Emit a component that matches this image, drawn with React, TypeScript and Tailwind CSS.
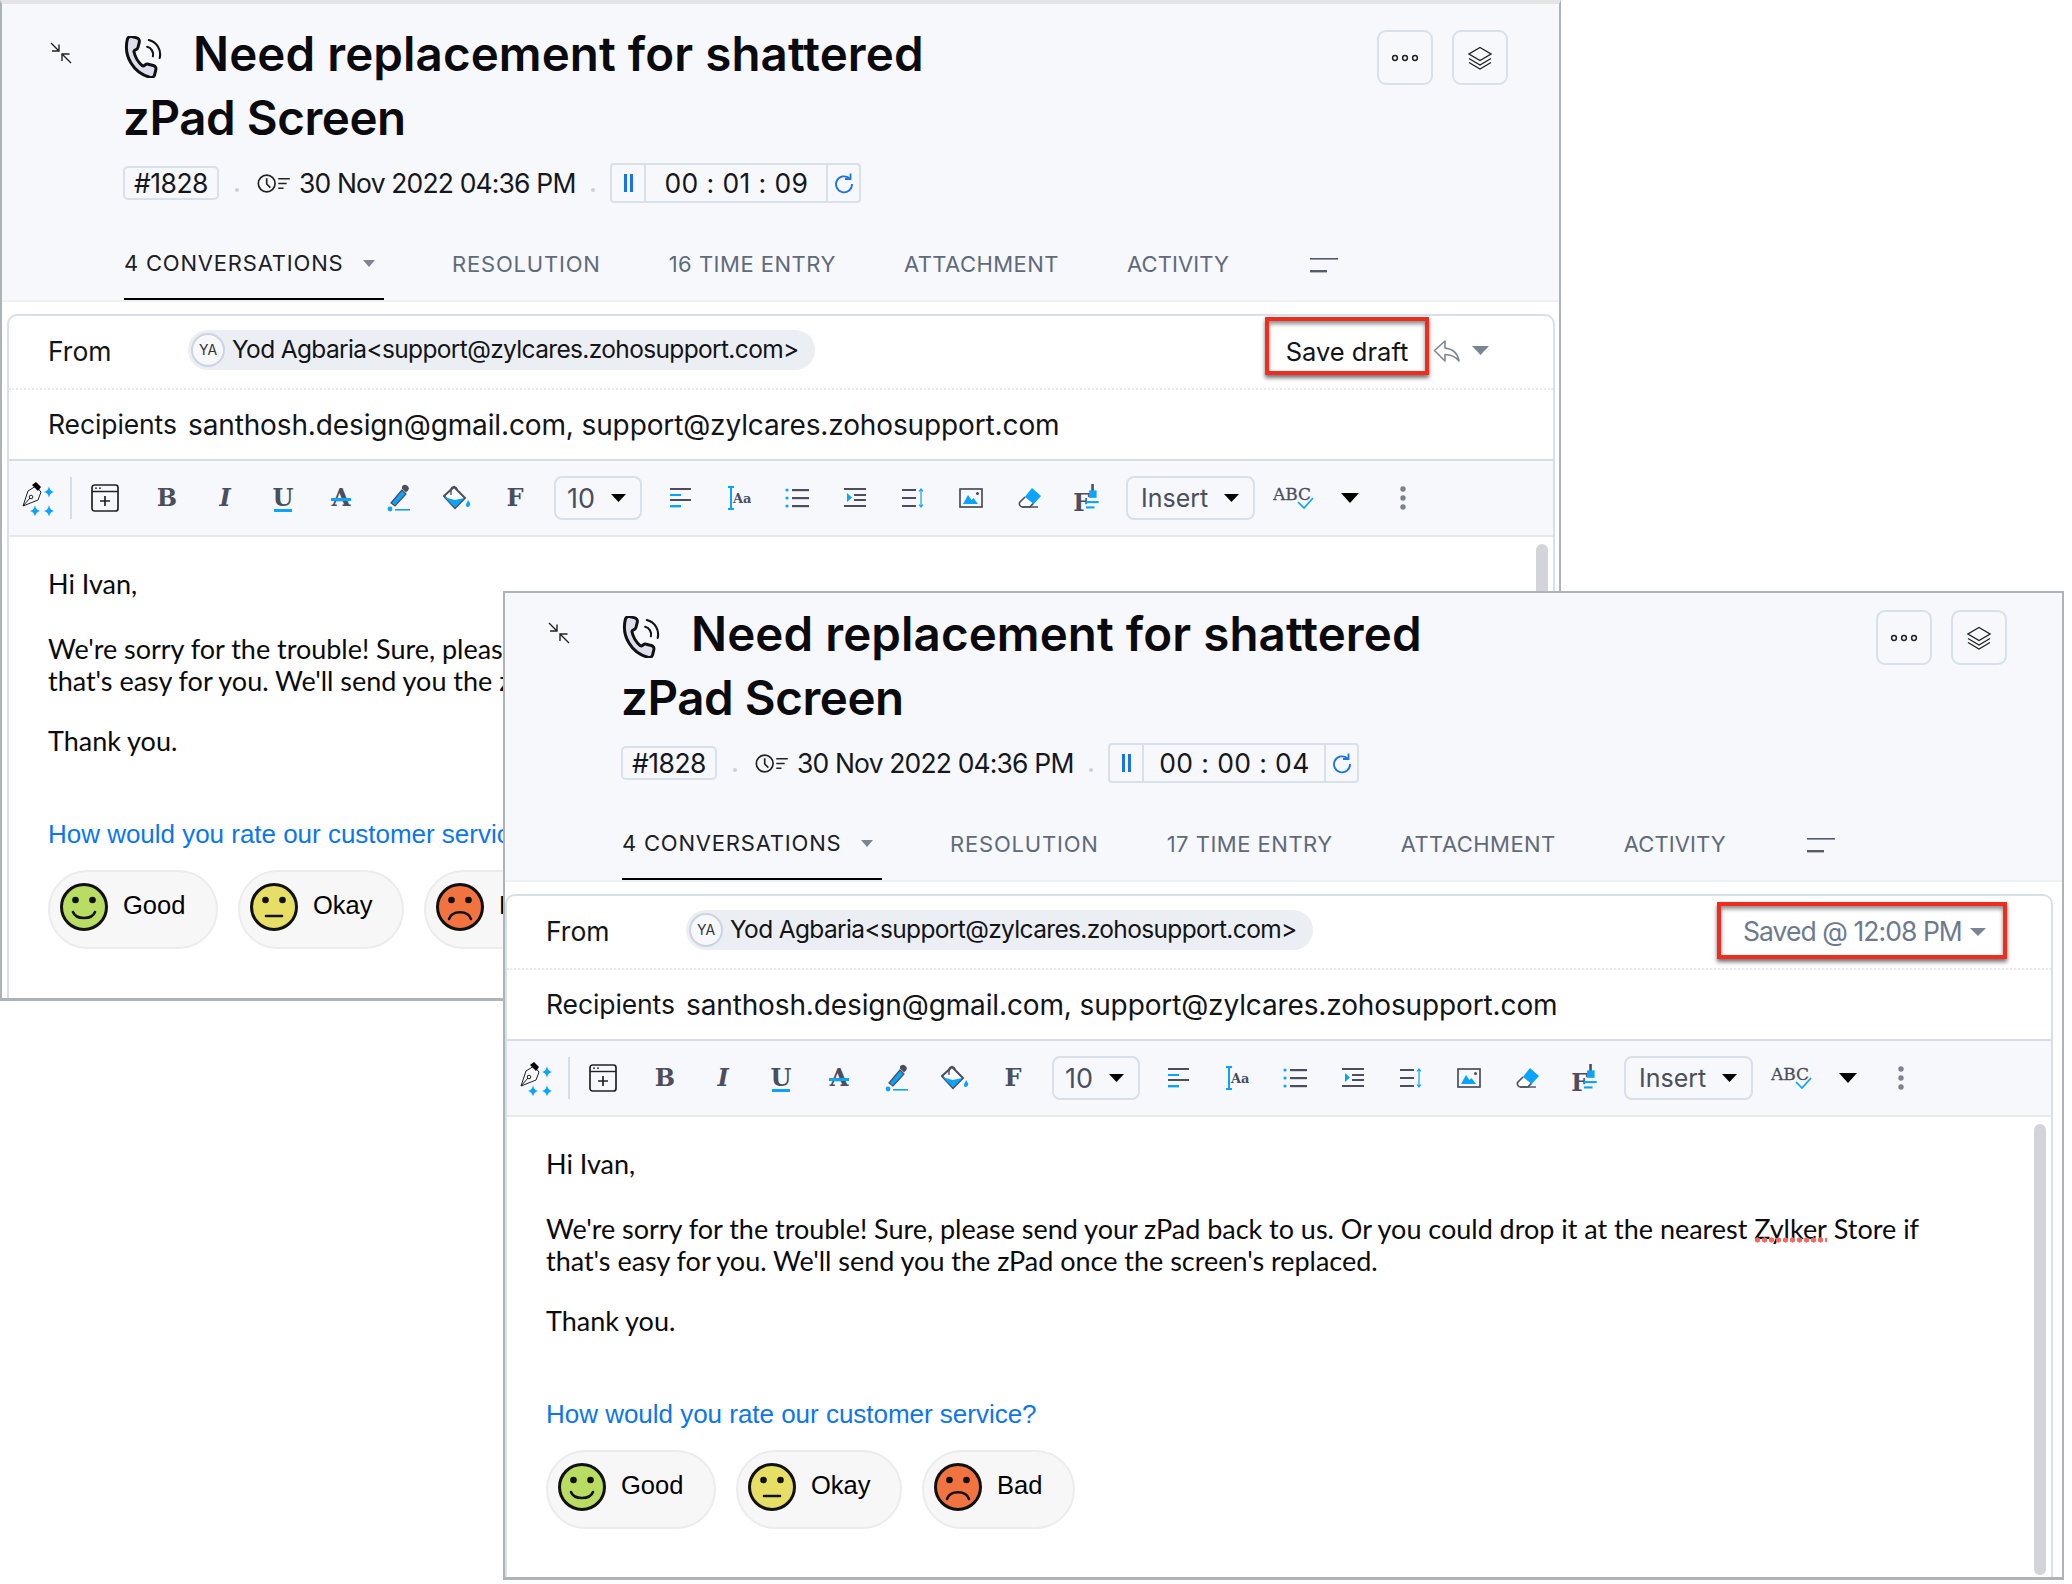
import type { ReactNode } from 'react';

const INK = '#4b4e5c';
const BLUE = '#0aa4ff';
const SERIF = 'DejaVu Serif, serif';

function Collapse() {
  return (
    <svg width="22" height="22" viewBox="0 0 22 22" fill="none" stroke="#222" strokeWidth="1.4" className="shrink-0">
      <path d="M1 1l8 8M9 2.5V9H2" />
      <path d="M21 21l-9-9M12 19v-7h7.5" />
    </svg>
  );
}

function PhoneIcon() {
  return (
    <svg width="42" height="42" viewBox="0 0 24 24" fill="none" className="-ml-[3px] mr-[31px] inline-block align-[-7px]">
      <g transform="rotate(14 12 12)" stroke="#111" strokeWidth="1.7" strokeLinejoin="round" strokeLinecap="round">
        <path
          fill="#dde0ec"
          d="M13.832 16.568a1 1 0 0 0 1.213-.303l.355-.465A2 2 0 0 1 17 15h3a2 2 0 0 1 2 2v3a2 2 0 0 1-2 2A18 18 0 0 1 2 4a2 2 0 0 1 2-2h3a2 2 0 0 1 2 2v3a2 2 0 0 1-.8 1.6l-.468.351a1 1 0 0 0-.292 1.233 14 14 0 0 0 6.392 6.384"
        />
        <path strokeWidth="1.2" d="M14 1.5a8.5 8.5 0 0 1 8.5 8.5" />
        <path strokeWidth="1.2" d="M14 5.5a4.5 4.5 0 0 1 4.5 4.5" />
      </g>
    </svg>
  );
}

function ClockLines() {
  return (
    <svg width="34" height="21" viewBox="0 0 32 20" fill="none" stroke="#222" strokeWidth="1.6" className="shrink-0">
      <circle cx="10" cy="10" r="8" />
      <path d="M10 5v5.5l3.5 3.5" />
      <path d="M21 5.5h11M21 10h8M21 14.5h5" />
    </svg>
  );
}

function Refresh() {
  return (
    <svg width="20" height="22" viewBox="0 0 20 22" fill="none" stroke="#1a73e8" strokeWidth="1.8">
      <path d="M15.5 6.5A8 8 0 1 0 18 12" />
      <path d="M16.5 1.5v5.5H11" />
    </svg>
  );
}

function Arrow({ w = 14, h = 8, color = '#000' }: { w?: number; h?: number; color?: string }) {
  return (
    <svg width={w} height={h} viewBox="0 0 14 8" preserveAspectRatio="none" className="shrink-0">
      <path d="M0 0h14L7 8z" fill={color} />
    </svg>
  );
}

function MoreIcon() {
  return (
    <svg width="28" height="8" viewBox="0 0 28 8" fill="none" stroke="#222" strokeWidth="1.5">
      <circle cx="4" cy="4" r="2.4" />
      <circle cx="14" cy="4" r="2.4" />
      <circle cx="24" cy="4" r="2.4" />
    </svg>
  );
}

function LayersIcon() {
  return (
    <svg width="24" height="24" viewBox="0 0 24 24" fill="none" stroke="#222" strokeWidth="1.3">
      <path d="M12 1.5L23 8l-11 6.5L1 8z" />
      <path d="M1 12.5l11 6.5 11-6.5" />
      <path d="M1 16.5l11 6.5 11-6.5" />
    </svg>
  );
}

function MenuLines() {
  return (
    <svg width="28" height="16" viewBox="0 0 28 16" className="ml-[81px]">
      <rect x="0" y="1" width="28" height="1.6" fill="#555c6a" />
      <rect x="0" y="13" width="17" height="2.4" fill="#555c6a" />
    </svg>
  );
}

function ReplyIcon() {
  return (
    <svg width="28" height="24" viewBox="0 0 28 24" fill="none" stroke="#7f8794" strokeWidth="1.6" strokeLinejoin="round">
      <path d="M12 2L1.5 11.5 12 22v-6.5c6 0 10 1.5 14 6.5-1-7-5-12-14-13z" />
    </svg>
  );
}

function PenSpark() {
  return (
    <svg width="34" height="35" viewBox="0 0 34 35" className="shrink-0">
      <path d="M1 25l5-15 8-5 5 6-3 8z" fill="none" stroke="#222" strokeWidth="1" />
      <path d="M1 25l7-8" stroke="#222" strokeWidth="1" />
      <circle cx="9" cy="16" r="1.8" fill="none" stroke="#222" strokeWidth="1" />
      <path d="M10 4l4-3 5 5-3 4z" fill="#000" />
      {[[27, 11], [13, 30], [27, 30]].map(([x, y]) => (
        <path
          key={`${x}-${y}`}
          d={`M${x} ${y - 6}q.6 5 5 6q-4.4 1-5 6q-.6-5-5-6q4.4-1 5-6z`}
          fill={BLUE}
        />
      ))}
    </svg>
  );
}

function Tool({ children, w = 'w-[58px]' }: { children: ReactNode; w?: string }) {
  return <div className={`flex shrink-0 items-center justify-center ${w}`}>{children}</div>;
}

function SerifGlyph({ label, italic, bar }: { label: string; italic?: boolean; bar?: 'under' | 'through' }) {
  return (
    <svg width="30" height="30" viewBox="0 0 30 30">
      <text
        x="15"
        y="23"
        textAnchor="middle"
        fontFamily={SERIF}
        fontWeight="700"
        fontSize="24"
        fontStyle={italic ? 'italic' : 'normal'}
        fill={INK}
      >
        {label}
      </text>
      {bar === 'under' && <rect x="6" y="26" width="18" height="3" fill={BLUE} />}
      {bar === 'through' && <rect x="5" y="15" width="20" height="3" fill={BLUE} />}
    </svg>
  );
}

function Toolbar() {
  return (
    <div className="flex h-[76px] w-full shrink-0 items-center border-b-2 border-[#e6e8ec] bg-[#f6f8fc] pl-[13px]">
      <PenSpark />
      <div className="ml-[14px] h-[42px] w-[2px] shrink-0 bg-[#d5dde8]" />
      <Tool w="w-[66px]">
        <svg width="28" height="28" viewBox="0 0 28 28" fill="none">
          <rect x="1" y="1" width="26" height="26" rx="2.5" stroke="#222" strokeWidth="1.7" />
          <path d="M1 7.5h26" stroke="#222" strokeWidth="1.4" />
          <path d="M4 4.2h2M8 4.2h2" stroke="#222" strokeWidth="1.2" />
          <path d="M14 12v10M9 17h10" stroke="#222" strokeWidth="1.7" />
        </svg>
      </Tool>
      <Tool><SerifGlyph label="B" /></Tool>
      <Tool><SerifGlyph label="I" italic /></Tool>
      <Tool><SerifGlyph label="U" bar="under" /></Tool>
      <Tool><SerifGlyph label="A" bar="through" /></Tool>
      <Tool>
        <svg width="24" height="28" viewBox="0 0 24 28">
          <path d="M4 19L15 6l4 4L8 22z" fill={BLUE} stroke={INK} strokeWidth="1.2" />
          <path d="M15 2.5a3 3 0 0 1 6 4l-2 2-4-4z" fill={INK} />
          <circle cx="3" cy="25" r="2.4" fill={BLUE} />
          <rect x="8" y="25" width="15" height="1.6" fill={BLUE} />
        </svg>
      </Tool>
      <Tool>
        <svg width="28" height="26" viewBox="0 0 28 26">
          <path d="M1 11L11 2l11 11-10 10z" fill="#fff" stroke={INK} strokeWidth="2" />
          <path d="M1.5 12l10 3 10-2-9.5 9.5z" fill={BLUE} />
          <path d="M8 10V5a3 3 0 0 1 6 0" fill="none" stroke={INK} strokeWidth="1.4" />
          <path d="M25 15c2 3 3 4 1.5 6a2 2 0 0 1-3.5 0c-.6-2 1-3 2-6z" fill={BLUE} />
        </svg>
      </Tool>
      <Tool><SerifGlyph label="F" /></Tool>
      <button type="button" className="ml-[10px] flex h-[44px] w-[88px] shrink-0 items-center rounded-[8px] border-2 border-[#d8e0ea] pl-[11px] text-[27px] text-[#4b4e5c]">
        <span className="leading-none">10</span>
        <span className="ml-[16px]"><Arrow w={15} h={8} /></span>
      </button>
      <div className="ml-[10px] flex">
        <Tool>
          <svg width="22" height="20" viewBox="0 0 22 20">
            <rect y="0" width="21" height="2" fill={INK} />
            <rect y="6" width="11" height="2" fill={BLUE} />
            <rect y="11" width="21" height="2" fill={INK} />
            <rect y="17" width="11" height="2.4" fill={BLUE} />
          </svg>
        </Tool>
        <Tool>
          <svg width="24" height="24" viewBox="0 0 24 24">
            <path d="M1 1h6M1 23h6M4 1v22" stroke={BLUE} strokeWidth="2" fill="none" />
            <text x="6" y="17" fontFamily={SERIF} fontWeight="700" fontSize="13" fill={INK}>Aa</text>
          </svg>
        </Tool>
        <Tool>
          <svg width="24" height="20" viewBox="0 0 24 20">
            <circle cx="2" cy="2" r="1.6" fill={BLUE} />
            <circle cx="2" cy="10" r="1.6" fill={BLUE} />
            <circle cx="2" cy="18" r="1.6" fill={BLUE} />
            <rect x="7" y="1" width="17" height="2.2" fill={INK} />
            <rect x="7" y="9" width="17" height="2.2" fill={INK} />
            <rect x="7" y="17" width="17" height="2.2" fill={INK} />
          </svg>
        </Tool>
        <Tool>
          <svg width="22" height="20" viewBox="0 0 22 20">
            <rect y="0" width="22" height="2" fill={INK} />
            <rect x="10" y="6" width="12" height="2" fill={INK} />
            <rect x="10" y="11" width="12" height="2" fill={INK} />
            <rect y="17" width="22" height="2" fill={INK} />
            <path d="M3 5l5 4.5-5 4.5z" fill={BLUE} />
          </svg>
        </Tool>
        <Tool>
          <svg width="22" height="20" viewBox="0 0 22 20">
            <rect y="1" width="14" height="2" fill={INK} />
            <rect y="9" width="14" height="2" fill={INK} />
            <rect y="17" width="14" height="2" fill={INK} />
            <path d="M19 1v18M17 3.5l2-2.5 2 2.5M17 16.5l2 2.5 2-2.5" stroke={BLUE} strokeWidth="1.2" fill="none" />
          </svg>
        </Tool>
        <Tool>
          <svg width="24" height="20" viewBox="0 0 24 20">
            <rect x="1" y="1" width="22" height="18" fill="none" stroke={INK} strokeWidth="1.7" />
            <path d="M4 16l5-9 3.5 5 2-2 4.5 6z" fill={BLUE} />
            <circle cx="18.5" cy="5.5" r="1.5" fill={INK} />
          </svg>
        </Tool>
        <Tool>
          <svg width="26" height="24" viewBox="0 0 26 24" className="ml-[3px]">
            <path d="M14 2l9 8-9 10-8-8z" fill={BLUE} />
            <path d="M7 11L2 16c-1.5 2 0 5 2.5 5H12l3-3.5" fill="#fff" stroke={INK} strokeWidth="1.6" />
            <path d="M4 21h16" stroke={INK} strokeWidth="1.4" />
          </svg>
        </Tool>
        <Tool>
          <svg width="28" height="33" viewBox="0 0 26 31" className="mt-[5px]">
            <text x="0" y="25" fontFamily={SERIF} fontWeight="700" fontSize="22" fill={INK}>F</text>
            <rect x="17" y="0" width="2.4" height="7" fill={INK} />
            <rect x="15" y="6" width="7" height="7" fill={BLUE} />
            <rect x="12" y="16" width="12" height="2" fill={BLUE} />
            <rect x="12" y="21" width="8" height="2" fill={BLUE} />
          </svg>
        </Tool>
      </div>
      <button type="button" className="ml-[10px] flex h-[44px] w-[129px] shrink-0 items-center rounded-[8px] border-2 border-[#d8e0ea] pl-[13px] text-[25px] text-[#4b4e5c]">
        <span className="leading-none">Insert</span>
        <span className="ml-[16px]"><Arrow w={15} h={8} /></span>
      </button>
      <div className="ml-[11px] flex">
        <Tool w="w-[56px]">
          <svg width="42" height="26" viewBox="0 0 42 26">
            <text x="0" y="15" fontFamily={SERIF} fontSize="17" fill={INK} stroke={INK} strokeWidth="0.3">ABC</text>
            <path d="M25 17l6 6 9-10" fill="none" stroke={BLUE} strokeWidth="1.7" />
          </svg>
        </Tool>
        <Tool w="w-[56px]"><Arrow w={18} h={10} /></Tool>
        <Tool w="w-[50px]">
          <svg width="6" height="24" viewBox="0 0 6 24">
            <circle cx="3" cy="3" r="2.7" fill="#7b818d" />
            <circle cx="3" cy="12" r="2.7" fill="#7b818d" />
            <circle cx="3" cy="21" r="2.7" fill="#7b818d" />
          </svg>
        </Tool>
      </div>
    </div>
  );
}

function Face({ fill, mouth }: { fill: string; mouth: string }) {
  return (
    <svg width="48" height="48" viewBox="0 0 48 48" className="mb-[6px] shrink-0">
      <circle cx="24" cy="24" r="22.5" fill={fill} stroke="#111" strokeWidth="3" />
      <circle cx="15.5" cy="17" r="3.3" fill="#111" />
      <circle cx="32.5" cy="17" r="3.3" fill="#111" />
      <path d={mouth} fill="none" stroke="#111" strokeWidth="2.6" strokeLinecap="round" />
    </svg>
  );
}

function Rating({ label, fill, mouth, w }: { label: string; fill: string; mouth: string; w: string }) {
  return (
    <div className={`flex h-[79px] shrink-0 items-center rounded-full border-2 border-[#ececec] bg-[#f7f7f7] pl-[10px] ${w}`}>
      <Face fill={fill} mouth={mouth} />
      <span className="mb-[8px] ml-[15px] text-[25.5px] leading-none text-black">{label}</span>
    </div>
  );
}

function Window({ outer, gutter, actions, elapsed, entries, action }: {
  outer: string;
  gutter: string;
  actions: string;
  elapsed: string;
  entries: string;
  action: ReactNode;
}) {
  return (
    <div className={`absolute flex flex-col overflow-hidden border-[#aeb3b7] bg-white font-[Inter] ${outer}`}>
      <header className={`shrink-0 border-b-2 border-[#eef1f4] bg-[#f6f8fc] ${gutter}`}>
        <div className="flex items-start">
          <div className="ml-[43px] mt-[29px]"><Collapse /></div>
          <div className="ml-[51px] w-[830px] pt-[9px]">
            <h1 className="text-[47.5px] font-semibold leading-[64px] tracking-[0.08px] text-[#0b0b0f]">
              <PhoneIcon />
              Need replacement for shattered
              <br />
              <span className="tracking-[-0.45px]">zPad Screen</span>
            </h1>
            <div className="mt-[13px] flex h-[40px] items-center text-[26.5px] leading-none text-[#15171c]">
              <span className="flex h-[34px] w-[96px] items-center justify-center rounded-[5px] border-2 border-[#d8e0ea] tracking-[-0.5px]">#1828</span>
              <span className="ml-[16px] mt-[14px] h-[4px] w-[4px] rounded-full bg-[#c9d0da]" />
              <span className="ml-[17px]"><ClockLines /></span>
              <span className="ml-[9px] tracking-[-0.85px]">30 Nov 2022 04:36 PM</span>
              <span className="ml-[16px] mt-[14px] h-[4px] w-[4px] rounded-full bg-[#c9d0da]" />
              <div className="ml-[15px] flex h-[40px] w-[251px] items-stretch rounded-[4px] border-2 border-[#d8e0ea]">
                <div className="flex w-[34px] items-center justify-center gap-[3px] border-r-2 border-[#d8e0ea]">
                  <i className="h-[18px] w-[3px] bg-[#1a73e8]" />
                  <i className="h-[18px] w-[3px] bg-[#1a73e8]" />
                </div>
                <div className="flex flex-1 items-center justify-center tracking-[0.4px]">{elapsed}</div>
                <div className="flex w-[33px] items-center justify-center border-l-2 border-[#d8e0ea]"><Refresh /></div>
              </div>
            </div>
          </div>
          <div className={`ml-auto mt-[17px] flex gap-[19px] ${actions}`}>
            <button type="button" className="flex h-[55px] w-[56px] items-center justify-center rounded-[9px] border-2 border-[#d8e0ea]"><MoreIcon /></button>
            <button type="button" className="flex h-[55px] w-[56px] items-center justify-center rounded-[9px] border-2 border-[#d8e0ea]"><LayersIcon /></button>
          </div>
        </div>
        <nav className="ml-[117px] mt-[26px] flex h-[71px] items-center text-[22px] tracking-[0.8px] text-[#5f6a7a]">
          <div className="flex h-full w-[260px] items-center border-b-2 border-black text-[#1c2026]">
            4 CONVERSATIONS
            <span className="ml-[20px]"><Arrow w={12} h={7} color="#7d8590" /></span>
          </div>
          <span className="ml-[68px]">RESOLUTION</span>
          <span className="ml-[68px] tracking-[0.5px]">{entries}</span>
          <span className="ml-[68px] tracking-[0.45px]">ATTACHMENT</span>
          <span className="ml-[68px] tracking-[0.1px]">ACTIVITY</span>
          <MenuLines />
        </nav>
      </header>
      <div className={`flex min-h-0 flex-1 flex-col pt-[12px] ${gutter}`}>
        <div className="flex w-[1548px] flex-1 flex-col overflow-hidden rounded-t-[10px] border-x-2 border-t-2 border-[#d7e0ea] text-[26.5px] text-[#121417]">
          <div className="flex h-[74px] shrink-0 items-center border-b-2 border-dotted border-[#e8eaee] pl-[39px]">
            <span className="w-[140px] shrink-0">From</span>
            <div className="mb-[5px] flex h-[40px] items-center rounded-full bg-[#ebeef2] pl-[3px] pr-[16px] text-[24.5px]">
              <span className="flex h-[34px] w-[34px] items-center justify-center rounded-full border-2 border-[#cdd3e2] bg-[#f6f8fc] text-[14px] text-[#333]">YA</span>
              <span className="ml-[7px] tracking-[-0.65px]">Yod Agbaria&lt;support@zylcares.zohosupport.com&gt;</span>
            </div>
            {action}
          </div>
          <div className="flex h-[71px] shrink-0 items-center border-b-2 border-[#d5dde8] pl-[39px]">
            <span className="w-[140px] shrink-0 tracking-[-0.1px]">Recipients</span>
            <span className="text-[28px] tracking-[-0.13px]">santhosh.design@gmail.com, support@zylcares.zohosupport.com</span>
          </div>
          <Toolbar />
          <div className="relative min-h-0 flex-1 pl-[39px] pt-[31px] font-[Lato] text-[27px] leading-[32px] tracking-[-0.02px] text-[#0b0b0b]">
            <div className="absolute bottom-[2px] right-[5px] top-[7px] w-[12px] rounded-full bg-[#d2d4d9]" />
            <p>Hi Ivan,</p>
            <p className="mt-[33px]">
              We're sorry for the trouble! Sure, please send your zPad back to us. Or you could drop it at the nearest{' '}
              <span className="relative">
                Zylker
                <span className="absolute left-0 right-0 top-[25px] h-[6px] bg-[radial-gradient(circle,#f26a63_2.4px,transparent_2.8px)] bg-[length:7px_6px]" />
              </span>{' '}
              Store if
              <br />
              that's easy for you. We'll send you the zPad once the screen's replaced.
            </p>
            <p className="mt-[28px]">Thank you.</p>
            <p className="mt-[61px] font-['Liberation_Sans'] text-[26px] leading-[32px] text-[#0b76ef]">How would you rate our customer service?</p>
            <div className="mt-[20px] flex gap-[20px] font-['Liberation_Sans']">
              <Rating label="Good" fill="#b9dc63" w="w-[170px]" mouth="M13 29c3 8 19 8 22 0" />
              <Rating label="Okay" fill="#e7de66" w="w-[166px]" mouth="M16 33h16" />
              <Rating label="Bad" fill="#f07340" w="w-[153px]" mouth="M13 36c3-9 19-9 22 0" />
            </div>
          </div>
        </div>
      </div>
    </div>
  );
}

function RedBox({ className, children }: { className: string; children: ReactNode }) {
  return (
    <div className={`flex shrink-0 items-center border-[4px] border-[#f22c1c] bg-white shadow-[0_3px_4px_rgba(0,0,0,0.55),inset_0_3px_4px_rgba(0,0,0,0.45)] ${className}`}>
      {children}
    </div>
  );
}

export default function App() {
  return (
    <div className="relative h-[1584px] w-[2072px] overflow-hidden bg-white">
      <Window
        outer="left-0 top-0 h-[1001px] w-[1561px] border-b-[3px] border-l-2 border-r-2 border-t-[4px] border-t-[#e4e4e4] [&>header]:pt-[9px]"
        gutter="pl-[5px]"
        actions="mr-[51px]"
        elapsed="00 : 01 : 09"
        entries="16 TIME ENTRY"
        action={
          <div className="ml-auto flex items-center self-start pr-[64px]">
            <RedBox className="mt-px h-[58px] w-[164px] justify-center pt-[12px] text-[25.5px]">Save draft</RedBox>
            <span className="ml-[4px] mt-[10px]"><ReplyIcon /></span>
            <span className="ml-[11px] mt-[10px]"><Arrow w={17} h={9} color="#7b8494" /></span>
          </div>
        }
      />
      <Window
        outer="left-[503px] top-[591px] h-[989px] w-[1561px] border-2 border-b-[3px]"
        gutter="pl-0"
        actions="mr-[55px]"
        elapsed="00 : 00 : 04"
        entries="17 TIME ENTRY"
        action={
          <RedBox className="ml-auto mr-[44px] mt-[6px] h-[57px] w-[290px] self-start pl-[22px] pt-[2px] text-[26.5px] tracking-[-0.95px] text-[#6d7a8e]">
            Saved @ 12:08 PM
            <span className="ml-[8px]"><Arrow w={16} h={8} color="#7b8494" /></span>
          </RedBox>
        }
      />
    </div>
  );
}
